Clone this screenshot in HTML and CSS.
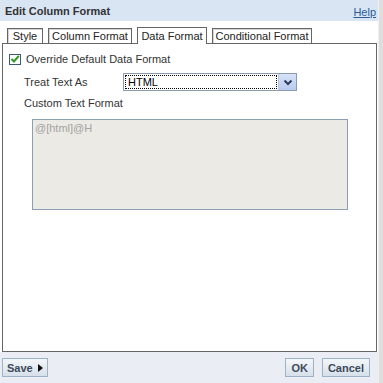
FILE: index.html
```html
<!DOCTYPE html>
<html>
<head>
<meta charset="utf-8">
<link rel="stylesheet" href="styles.css">
</head>
<body>
<div class="frame">
  <div class="dialog">
    <div class="header">
      <span class="title">Edit Column Format</span>
      <a class="help" href="#">Help</a>
    </div>
    <div class="main">
      <div class="tabs">
        <div class="tab tab-style">Style</div>
        <div class="tab tab-col">Column Format</div>
        <div class="tab active tab-data">Data Format</div>
        <div class="tab tab-cond">Conditional Format</div>
      </div>
      <div class="panel">
        <div class="check-row">
          <span class="checkbox">
            <svg width="10" height="10" viewBox="0 0 10 10"><path d="M1.5 5 L4 7.5 L8.8 1.8" fill="none" stroke="#2f9a22" stroke-width="2"/></svg>
          </span>
          <span class="check-label">Override Default Data Format</span>
        </div>
        <div class="field-row">
          <span class="field-label">Treat Text As</span>
          <div class="select">
            <span class="select-value"><span class="focus">HTML</span></span>
            <span class="select-btn">
              <svg width="10" height="7" viewBox="0 0 10 7"><path d="M1.5 1.5 L5 5 L8.5 1.5" fill="none" stroke="#2d3b5a" stroke-width="2"/></svg>
            </span>
          </div>
        </div>
        <div class="custom-label">Custom Text Format</div>
        <div class="textarea">@[html]@H</div>
      </div>
    </div>
    <div class="footer">
      <button class="btn save">Save <span class="tri"></span></button>
      <div class="right-btns">
        <button class="btn">OK</button>
        <button class="btn">Cancel</button>
      </div>
    </div>
  </div>
  <div class="edge"></div>
</div>
</body>
</html>
```
FILE: styles.css
```css
html, body {
  margin: 0;
  padding: 0;
  background: #ffffff;
}
body {
  font-family: "Liberation Sans", Arial, sans-serif;
  font-size: 11px;
  color: #333333;
}
.frame {
  display: flex;
  width: 383px;
  height: 383px;
}
.dialog {
  width: 378px;
  height: 383px;
  display: flex;
  flex-direction: column;
  background: #ffffff;
}
.edge {
  width: 5px;
  height: 383px;
  background: #dedede;
  border-left: 1px solid #efefef;
  box-sizing: border-box;
}
.header {
  height: 21px;
  background: #d9e5f3;
  display: flex;
  align-items: center;
  justify-content: space-between;
  padding: 0 2px 0 5px;
}
.title {
  font-weight: bold;
  font-size: 11px;
  color: #333333;
}
.help {
  color: #2a5c9a;
  text-decoration: underline;
  font-size: 11px;
  margin-top: 2px;
}
.main {
  flex: 1;
  display: flex;
  flex-direction: column;
  padding: 6px 1px 0 2px;
}
.tabs {
  display: flex;
  align-items: flex-end;
  height: 16px;
  padding-left: 5px;
  gap: 5px;
}
.tab {
  height: 14px;
  line-height: 14px;
  border: 1px solid #666666;
  border-bottom: none;
  background: #ffffff;
  font-size: 11px;
  color: #222222;
  text-align: center;
  white-space: nowrap;
  box-shadow: inset 1px 1px 0 #d4d4d4;
}
.tab-style { width: 34px; }
.tab-col { width: 82px; }
.tab-data { width: 68px; }
.tab-cond { width: 98px; }
.tab.active {
  height: 16px;
  line-height: 16px;
  box-shadow: none;
  position: relative;
  margin-bottom: -1px;
  z-index: 1;
}
.panel {
  height: 309px;
  box-sizing: border-box;
  border: 1px solid #666666;
  padding: 9px 0 0 6px;
}
.check-row {
  display: flex;
  align-items: center;
  height: 12px;
}
.checkbox {
  width: 12px;
  height: 11px;
  box-sizing: border-box;
  border: 1px solid #3d5a75;
  display: flex;
  align-items: center;
  justify-content: center;
  background: #ffffff;
}
.check-label {
  margin-left: 5px;
}
.field-row {
  display: flex;
  align-items: center;
  margin-top: 8px;
  padding-left: 15px;
  height: 18px;
}
.field-label {
  width: 99px;
}
.select {
  width: 174px;
  height: 18px;
  box-sizing: border-box;
  border: 1px solid #8a9bb0;
  display: flex;
}
.select-value {
  flex: 1;
  padding: 1px;
  display: flex;
}
.focus {
  flex: 1;
  border: 1px dotted #000000;
  color: #000000;
  line-height: 12px;
  padding-left: 2px;
}
.select-btn {
  width: 17px;
  background: linear-gradient(#d6e2f8, #b9cbee);
  border-left: 1px solid #b8c6dc;
  display: flex;
  align-items: center;
  justify-content: center;
}
.custom-label {
  margin-top: 6px;
  padding-left: 15px;
  height: 15px;
}
.textarea {
  margin: 7px 0 0 23px;
  width: 316px;
  height: 91px;
  box-sizing: border-box;
  background: #ebeae4;
  border: 1px solid #8ba0b5;
  color: #a3a3a3;
  padding: 2px 2px;
}
.footer {
  flex: 1;
  background: #eaeef4;
  display: flex;
  justify-content: space-between;
  align-items: flex-start;
  padding: 6px 8px 0 2px;
}
.right-btns {
  display: flex;
  gap: 8px;
}
.btn {
  height: 19px;
  box-sizing: border-box;
  border: 1px solid #9eb1c5;
  background: linear-gradient(#f4f7fa, #d6e0ea);
  font-family: "Liberation Sans", Arial, sans-serif;
  font-weight: bold;
  font-size: 11px;
  color: #3d4a5a;
  padding: 0 5px;
  margin: 0;
  display: flex;
  align-items: center;
}
.save {
  width: 46px;
  padding-left: 4px;
}
.tri {
  display: inline-block;
  width: 0;
  height: 0;
  border-left: 5px solid #111111;
  border-top: 4px solid transparent;
  border-bottom: 4px solid transparent;
  margin-left: 5px;
}
```
